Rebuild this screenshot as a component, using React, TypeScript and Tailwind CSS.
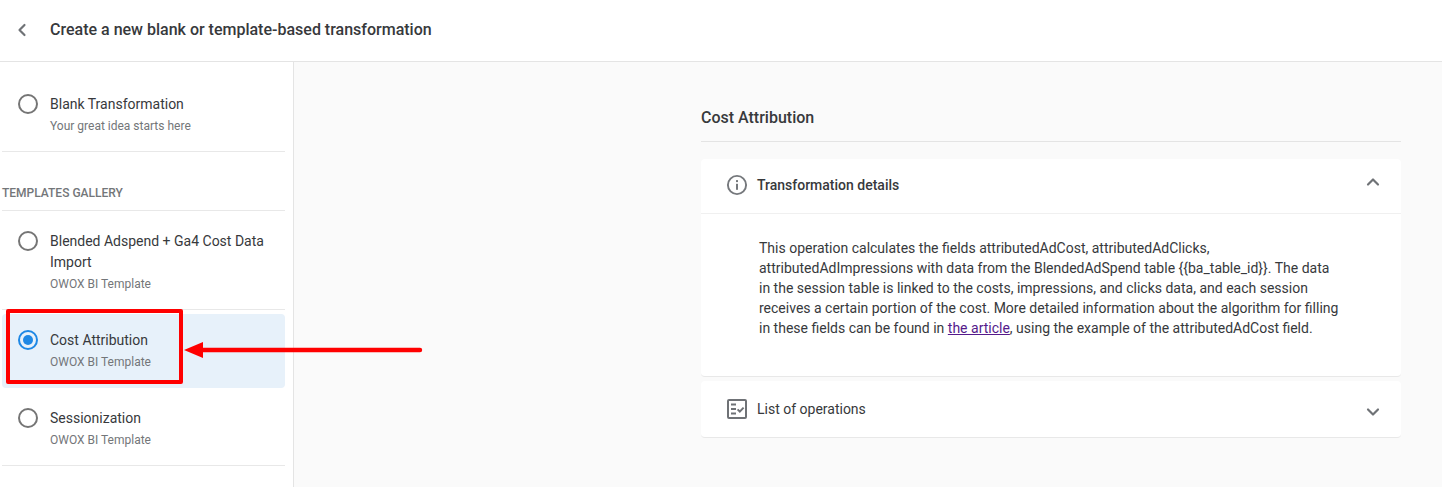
import { ChevronDown, ChevronLeft, ChevronUp } from 'lucide-react'

const templates = [
  { title: 'Blended Adspend + Ga4 Cost Data Import', note: 'OWOX BI Template' },
  { title: 'Cost Attribution', note: 'OWOX BI Template', selected: true },
  { title: 'Sessionization', note: 'OWOX BI Template' },
]

function Radio({ checked }: { checked?: boolean }) {
  return (
    <span
      className={`flex h-5 w-5 shrink-0 items-center justify-center rounded-full border-2 ${
        checked ? 'border-[#1e88e5]' : 'border-[#757575]'
      }`}
    >
      {checked && <span className="h-[10px] w-[10px] rounded-full bg-[#1e88e5]" />}
    </span>
  )
}

function Option({ title, note, selected }: { title: string; note: string; selected?: boolean }) {
  return (
    <div className={`flex gap-[12px] rounded px-[16px] ${selected ? 'bg-[#e7f1fa] pt-[16px] pb-[15px]' : ''}`}>
      <Radio checked={selected} />
      <div className="min-w-0">
        <div className="text-[14px] leading-[21px] text-[#37393c]">{title}</div>
        <div className="mt-[1px] text-[12px] leading-[21px] text-[#737679]">{note}</div>
      </div>
    </div>
  )
}

function InfoIcon() {
  return (
    <svg width="22" height="22" viewBox="0 0 22 22" fill="none" className="shrink-0">
      <circle cx="11" cy="11" r="9.1" stroke="#75787c" strokeWidth="1.9" />
      <rect x="10" y="9.8" width="2" height="6" fill="#75787c" />
      <rect x="10" y="6.1" width="2" height="2" fill="#75787c" />
    </svg>
  )
}

function ChecklistIcon() {
  return (
    <svg width="20" height="20" viewBox="0 0 20 20" fill="none" className="shrink-0">
      <rect x="1" y="1" width="18" height="18" rx="1" stroke="#6f7276" strokeWidth="2" />
      <path d="M4 5.5h5M4 10h5M4 14.5h5" stroke="#6f7276" strokeWidth="2" />
      <path d="M10.6 10.4l2.2 2.2 3.8-4" stroke="#6f7276" strokeWidth="2" />
    </svg>
  )
}

export default function App() {
  return (
    <div className="relative h-[487px] w-[1442px] overflow-hidden bg-white font-['Roboto',sans-serif]">
      <header className="flex h-[62px] items-center border-b border-[#e4e4e4] pb-[2px]">
        <ChevronLeft className="ml-[12px] h-5 w-5 text-[#6f7276]" strokeWidth={2.6} />
        <h1 className="ml-[18px] text-[16px] font-medium text-[#37393c]">
          Create a new blank or template-based transformation
        </h1>
      </header>

      <div className="flex h-[425px]">
        <aside className="w-[294px] shrink-0 border-r border-[#e4e4e4] pr-[8px] pl-[2px]">
          <div className="border-b border-[#e8e8e8] pt-[32px] pb-[14px]">
            <Option title="Blank Transformation" note="Your great idea starts here" />
          </div>
          <div className="border-b border-[#e8e8e8] pt-[33px] pb-[9px] text-[12px] leading-[16px] font-medium text-[#737679]">
            TEMPLATES GALLERY
          </div>
          <div className="border-b border-[#e8e8e8] pt-[20px] pb-[14px]">
            <Option {...templates[0]} />
          </div>
          <div className="pt-[4px]">
            <Option {...templates[1]} />
          </div>
          <div className="border-b border-[#e8e8e8] pt-[20px] pb-[14px]">
            <Option {...templates[2]} />
          </div>
        </aside>

        <main className="flex-1 bg-[#fafafa] pt-[44px] pr-[41px] pl-[407px]">
          <h2 className="border-b border-[#e4e4e4] pb-[11px] text-[16px] leading-[24px] font-medium text-[#37393c]">
            Cost Attribution
          </h2>

          <section className="mt-[17px] rounded border-b border-[#e8e8e8] bg-white">
            <div className="flex h-[55px] items-center border-b border-[#f0f0f0] pr-[18px] pb-[2px] pl-[25px]">
              <InfoIcon />
              <span className="ml-[9px] flex-1 text-[14px] font-medium text-[#37393c]">Transformation details</span>
              <ChevronUp className="mb-[6px] h-5 w-5 text-[#6f7276]" strokeWidth={2.6} />
            </div>
            <div className="h-[162px] pt-[24px] pl-[58px] text-[14px] leading-[20px] text-[#37393c]">
              <p className="w-[582px]">
                This operation calculates the fields attributedAdCost, attributedAdClicks, attributedAdImpressions with
                data from the BlendedAdSpend table {'{{ba_table_id}}'}. The data in the session table is linked to the
                costs, impressions, and clicks data, and each session receives a certain portion of the cost. More
                detailed information about the algorithm for filling in these fields can be found in{' '}
                <a className="text-[#551a8b] underline">the article</a>, using the example of the attributedAdCost field.
              </p>
            </div>
          </section>

          <section className="mt-[4px] flex h-[57px] items-center rounded border-b border-[#e8e8e8] bg-white pr-[18px] pl-[26px]">
            <ChecklistIcon />
            <span className="ml-[10px] flex-1 text-[14px] text-[#37393c]">List of operations</span>
            <ChevronDown className="mt-[6px] h-5 w-5 text-[#6f7276]" strokeWidth={2.6} />
          </section>
        </main>
      </div>

      {/* red annotation over the screenshot */}
      <div className="absolute top-[309px] left-[6px] h-[75px] w-[177px] rounded-[2px] border-[4px] border-[#ff0000]" />
      <svg className="absolute top-[330px] left-[180px]" width="250" height="40" viewBox="0 0 250 40" fill="none">
        <path d="M22 20H240" stroke="#ff0000" strokeWidth="4.4" strokeLinecap="round" />
        <path d="M4 20L23 12V28Z" fill="#ff0000" />
      </svg>
    </div>
  )
}
